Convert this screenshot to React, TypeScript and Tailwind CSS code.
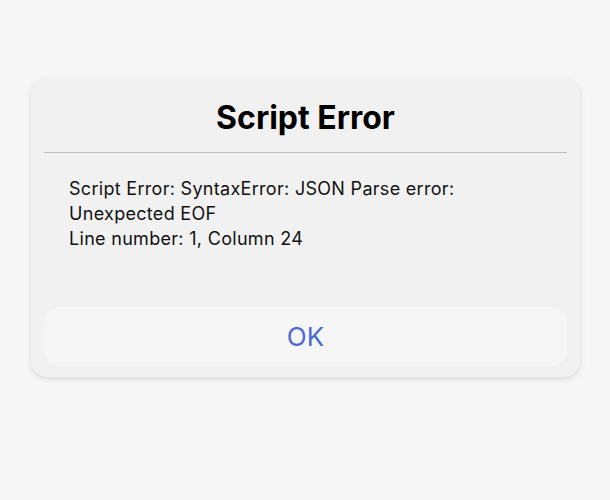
export default function App() {
  return (
    <div
      className="h-[500px] w-[610px] bg-[#f7f7f7] pt-[78px] pl-[31px]"
      style={{ fontFamily: "Inter, 'Noto Sans', sans-serif" }}
    >
      <div className="flex h-[299px] w-[549px] flex-col rounded-[16px] bg-[#f1f1f1] px-[13px] pb-[11px] shadow-[0_2px_6px_rgba(0,0,0,0.13)]">
        <h1 className="pt-[20px] text-center text-[32px] font-bold leading-[40px] text-black">
          Script Error
        </h1>
        <div className="mt-[14px] h-px bg-[#bdbdbd]" />
        <p className="mt-[23px] pl-[25px] pr-[20px] text-[18px] leading-[25px] tracking-[0.3px] text-[#111]">
          Script Error: SyntaxError: JSON Parse error:
          <br />
          Unexpected EOF
          <br />
          Line number: 1, Column 24
        </p>
        <button className="mt-auto flex h-[59px] w-full items-center justify-center rounded-[16px] bg-[#f6f6f6] text-[26px] text-[#4a6bd0]">
          OK
        </button>
      </div>
    </div>
  );
}
